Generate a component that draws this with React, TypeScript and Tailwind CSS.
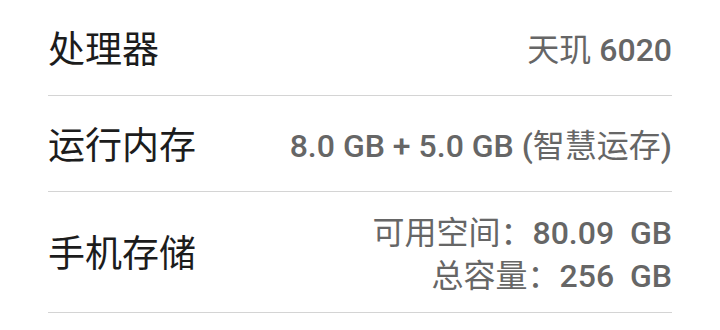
export default function App() {
  const font = { fontFamily: 'Roboto, "Noto Sans CJK SC", sans-serif' };

  return (
    <div className="w-[720px] h-[330px] bg-white" style={font}>
      <div className="mx-12">
        {/* processor */}
        <div className="flex h-[96px] items-center justify-between border-b border-[#d4d4d4] pt-[5px]">
          <span className="text-[37px] leading-none text-[#1c1c1c]">处理器</span>
          <span className="text-[32px] leading-none font-medium text-[#666666]">
            <span className="font-normal">天玑</span> 6020
          </span>
        </div>

        {/* memory */}
        <div className="flex h-[96px] items-center justify-between border-b border-[#d4d4d4] pt-[5px]">
          <span className="text-[37px] leading-none text-[#1c1c1c]">运行内存</span>
          <span className="text-[32px] leading-none font-medium text-[#666666]">
            8.0 GB + 5.0 GB (<span className="font-normal">智慧运存</span>)
          </span>
        </div>

        {/* storage */}
        <div className="flex h-[121px] items-center justify-between border-b border-[#d4d4d4] pt-[5px]">
          <span className="text-[37px] leading-none text-[#1c1c1c]">手机存储</span>
          <div className="flex flex-col items-end text-[32px] leading-[43px] font-medium text-[#666666]">
            <span className="whitespace-pre">
              <span className="font-normal">可用空间：</span>80.09  GB
            </span>
            <span className="whitespace-pre">
              <span className="font-normal">总容量：</span>256  GB
            </span>
          </div>
        </div>
      </div>
    </div>
  );
}
